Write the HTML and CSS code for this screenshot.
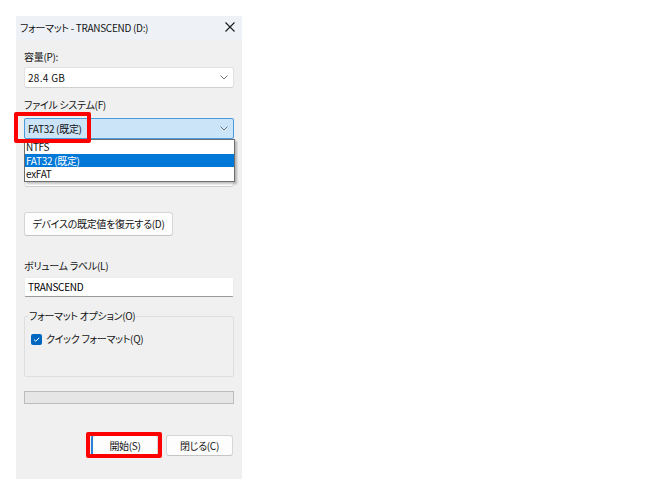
FILE: index.html
```html
<!DOCTYPE html>
<html lang="ja">
<head>
<meta charset="utf-8">
<title>フォーマット - TRANSCEND (D:)</title>
<link rel="stylesheet" href="styles.css">
</head>
<body>
<div class="dialog">
  <div class="titlebar">
    <span class="title">フォーマット - TRANSCEND (D:)</span>
    <svg class="close" width="10" height="10" viewBox="0 0 10 10"><path d="M0.5 0.5 L9.5 9.5 M9.5 0.5 L0.5 9.5" stroke="#1a1a1a" stroke-width="1.1" fill="none"/></svg>
  </div>
  <div class="content">
    <div class="label l1">容量(P):</div>
    <div class="combo c1"><span class="num">28.4 GB</span>
      <svg class="chev" width="8" height="5" viewBox="0 0 8 5"><path d="M0.5 0.5 L4 4 L7.5 0.5" stroke="#777" fill="none"/></svg></div>
    <div class="label l2">ファイル システム(F)</div>
    <div class="combo-wrap">
      <div class="combo c2 active"><span>FAT32 (既定)</span>
        <svg class="chev" width="8" height="5" viewBox="0 0 8 5"><path d="M0.5 0.5 L4 4 L7.5 0.5" stroke="#777" fill="none"/></svg></div>
      <ul class="droplist">
        <li>NTFS</li>
        <li class="sel">FAT32 (既定)</li>
        <li>exFAT</li>
      </ul>
    </div>
    <div class="label l3"></div>
    <div class="combo c3"><span></span>
      <svg class="chev" width="8" height="5" viewBox="0 0 8 5"><path d="M0.5 0.5 L4 4 L7.5 0.5" stroke="#777" fill="none"/></svg></div>
    <button class="btn restore">デバイスの既定値を復元する(D)</button>
    <div class="label l4">ボリューム ラベル(L)</div>
    <div class="input">TRANSCEND</div>
    <fieldset class="group">
      <legend>フォーマット オプション(O)</legend>
      <div class="check-row">
        <span class="checkbox"><svg width="11" height="11" viewBox="0 0 11 11"><path d="M3 5.6 L4.8 7.3 L8.2 3.8" stroke="#fff" stroke-width="1" fill="none"/></svg></span>
        <span>クイック フォーマット(Q)</span>
      </div>
    </fieldset>
    <div class="progress"></div>
    <div class="actions">
      <button class="btn act default">開始(S)</button>
      <button class="btn act">閉じる(C)</button>
    </div>
  </div>
</div>
<div class="mark m1"></div>
<div class="mark m2"></div>
</body>
</html>
```

FILE: styles.css
```css
html, body {
  margin: 0;
  padding: 0;
  background: #ffffff;
  overflow: hidden;
}
body {
  font-family: "Noto Sans CJK JP", "Noto Sans", sans-serif;
  font-size: 10px;
  font-feature-settings: "palt" 1;
  letter-spacing: -0.3px;
  color: #141414;
}
.dialog {
  margin: 16px 0 0 16px;
  width: 226px;
  height: 463px;
  background: #f0f0f0;
  display: flex;
  flex-direction: column;
}
.titlebar {
  height: 24px;
  background: #eef2f7;
  display: flex;
  align-items: center;
  justify-content: space-between;
  padding: 0 7px 0 4px;
}
.title {
  line-height: 14px;
}
.close { display: block; margin-top: -2px; }
.content {
  padding: 10px 8px 0 8px;
  display: flex;
  flex-direction: column;
}
.label { line-height: 14px; height: 14px; }
.l2 { margin-top: 10px; }
.l3 { margin-top: 8px; }
.l4 { margin-top: 23px; }
.combo {
  height: 21px;
  box-sizing: border-box;
  background: #ffffff;
  border: 1px solid #e2e2e2;
  border-bottom-color: #cfcfcf;
  border-radius: 3px;
  display: flex;
  align-items: center;
  justify-content: space-between;
  padding: 0 5px 0 3px;
  color: #111;
}
.num { letter-spacing: 0.3px; }
.c1 { margin-top: 3px; }
.c3 { margin-top: 5px; }
.chev { display: block; }
.combo-wrap {
  margin-top: 6px;
  position: relative;
}
.combo.active {
  background: #cce4f7;
  border-color: #4a9ae0;
  border-radius: 2px;
}
.droplist {
  position: absolute;
  top: 21px;
  left: 0;
  width: 211px;
  margin: 0;
  padding: 0;
  list-style: none;
  background: #ffffff;
  border: 1px solid #6e6e6e;
  box-sizing: border-box;
  box-shadow: 2px 2px 2px rgba(0,0,0,0.25);
  z-index: 2;
}
.droplist li {
  height: 13.5px;
  line-height: 13.5px;
  padding-left: 1px;
  color: #111;
}
.droplist li.sel {
  background: #0078d7;
  color: #ffffff;
}
.btn {
  font-family: inherit;
  font-size: 10px;
  font-feature-settings: "palt" 1;
  letter-spacing: -0.3px;
  color: #141414;
  background: #fdfdfd;
  border: 1px solid #d6d6d6;
  border-bottom-color: #c4c4c4;
  border-radius: 3px;
  padding: 0;
  margin: 0;
  line-height: 14px;
}
.restore {
  margin-top: 25px;
  width: 149px;
  height: 24px;
}
.input {
  margin-top: 4px;
  height: 20px;
  box-sizing: border-box;
  background: #ffffff;
  border: 1px solid #ededed;
  border-bottom: 1px solid #9a9a9a;
  border-radius: 2px;
  padding: 0 3px;
  line-height: 18px;
  color: #000;
}
.group {
  margin: 12px 0 0 0;
  padding: 0 3px 30px 3px;
  border: 1px solid #dedede;
  border-radius: 2px;
  min-width: 0;
}
.group legend {
  padding: 0 1px;
  line-height: 14px;
  height: 14px;
}
.check-row {
  margin-top: 9px;
  display: flex;
  align-items: center;
  height: 14px;
  line-height: 14px;
}
.checkbox {
  width: 11px;
  height: 11px;
  margin: 0 4px 0 3px;
  background: #0067c0;
  border-radius: 2px;
  display: flex;
}
.progress {
  margin-top: 14px;
  height: 13px;
  box-sizing: border-box;
  background: #e6e6e6;
  border: 1px solid #bcbcbc;
}
.actions {
  margin-top: 31px;
  display: flex;
  justify-content: flex-end;
  gap: 8px;
  padding-right: 1px;
}
.act {
  width: 67px;
  height: 21px;
}
.act.default {
  border-left: 2px solid #2b7fd6;
}
.mark {
  position: absolute;
  border: 4px solid #ff0000;
  border-radius: 2px;
  box-sizing: border-box;
  z-index: 5;
}
.m1 { left: 14px; top: 112px; width: 77px; height: 31px; }
.m2 { left: 86px; top: 432px; width: 76px; height: 26px; }
```
